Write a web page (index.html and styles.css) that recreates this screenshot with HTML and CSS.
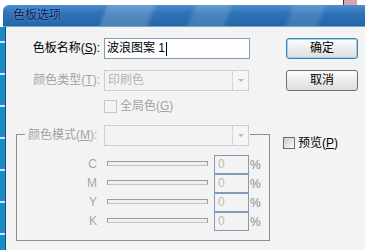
FILE: index.html
```html
<!DOCTYPE html>
<html>
<head>
  <meta charset="UTF-8">
  <link rel="stylesheet" href="styles.css">
</head>
<body>
  <div class="top-strip">
    <span class="tray"></span>
  </div>

  <div class="window">
    <div class="titlebar"><span class="title-text">色板选项</span></div>
    <div class="frame">
      <div class="edge"></div>
      <div class="dialog">
        <div class="form">
          <div class="row">
            <span class="lbl">色板名称(<u>S</u>):</span>
            <div class="field text">波浪图案 1<span class="caret"></span></div>
          </div>
          <div class="row gap-md">
            <span class="lbl off">颜色类型(<u>T</u>):</span>
            <div class="field select">
              <span>印刷色</span>
              <span class="arrow"></span>
            </div>
          </div>
          <div class="row gap-sm">
            <span class="lbl"></span>
            <span class="check off"><span class="box"></span><span>全局色(<u>G</u>)</span></span>
          </div>

          <div class="group">
            <div class="legend">
              <span class="legend-lbl off">颜色模式(<u>M</u>):</span>
              <div class="field select empty">
                <span></span>
                <span class="arrow"></span>
              </div>
            </div>
            <div class="ink-rows">
              <div class="ink"><span class="ch">C</span><span class="track"></span><span class="num">0</span><span class="pct">%</span></div>
              <div class="ink"><span class="ch">M</span><span class="track"></span><span class="num">0</span><span class="pct">%</span></div>
              <div class="ink"><span class="ch">Y</span><span class="track"></span><span class="num">0</span><span class="pct">%</span></div>
              <div class="ink"><span class="ch">K</span><span class="track"></span><span class="num">0</span><span class="pct">%</span></div>
            </div>
          </div>
        </div>

        <div class="side">
          <button class="btn default">确定</button>
          <button class="btn">取消</button>
          <span class="check preview"><span class="box"></span><span>预览(<u>P</u>)</span></span>
        </div>
      </div>
    </div>
  </div>
</body>
</html>
```

FILE: styles.css
```css
:root {
  --face: #f3f3f3;
  --text: #000000;
  --muted: #a3a3a3;
  --field-border: #7f9db9;
  --off-border: #cfcfcf;
}

body {
  margin: 0;
  width: 365px;
  height: 250px;
  overflow: hidden;
  background: #ffffff;
  font-family: "Liberation Sans", "Noto Sans CJK SC", sans-serif;
  font-size: 12px;
  color: var(--text);
}

u {
  text-decoration: underline;
  text-underline-offset: 1px;
}

.top-strip {
  height: 5px;
  display: flex;
  justify-content: flex-end;
  padding-right: 8px;
}

.tray {
  width: 14px;
  height: 5px;
  box-sizing: border-box;
  border-left: 1px solid #4a3038;
  border-right: 1px solid #c9a5ae;
  background: #d9a2b3;
}

.titlebar {
  margin-left: 3px;
  height: 21px;
  line-height: 21px;
  padding-left: 10px;
  border-top-left-radius: 6px;
  background:
    linear-gradient(110deg, transparent 0 96px, rgba(255,255,255,0.18) 100px 140px, transparent 146px 178px, rgba(255,255,255,0.14) 184px 212px, transparent 218px 270px, rgba(255,255,255,0.12) 276px 300px, transparent 306px),
    linear-gradient(to bottom, #4a8fcf 0%, #2f72b6 40%, #2566a8 100%);
  border-bottom: 1px solid #6fa6d8;
}

.title-text {
  color: #08195a;
  font-size: 12px;
  text-shadow: 0 0 2px rgba(200, 225, 255, 0.6);
}

.frame {
  display: flex;
  height: 223px;
}

.edge {
  width: 5px;
  border-right: 1px solid #0d4f7a;
  background:
    repeating-linear-gradient(to bottom, transparent 0 14px, rgba(255,255,255,0.8) 14px 16px, transparent 16px 32px),
    #1a8cc6;
}

.dialog {
  flex: 1;
  display: flex;
  background: var(--face);
  padding-top: 11px;
}

.form {
  width: 264px;
}

.row {
  display: flex;
  align-items: center;
  gap: 4px;
}

.gap-md { margin-top: 11px; }
.gap-sm { margin-top: 8px; }

.lbl {
  width: 94px;
  text-align: right;
  white-space: nowrap;
  line-height: 21px;
}

.off { color: var(--muted); }

.field {
  height: 21px;
  box-sizing: border-box;
  line-height: 19px;
}

.field.text {
  width: 146px;
  border: 1px solid var(--field-border);
  background: #ffffff;
  padding-left: 2px;
  display: flex;
  align-items: center;
  white-space: pre;
}

.caret {
  width: 1px;
  height: 14px;
  margin-left: 1px;
  background: #000000;
}

.field.select {
  width: 145px;
  border: 1px solid var(--off-border);
  background: #f2f2f2;
  color: #b5b5b5;
  display: flex;
  justify-content: space-between;
  padding-left: 3px;
}

.arrow {
  width: 16px;
  height: 19px;
  box-sizing: border-box;
  border-left: 1px solid #d6d6d6;
  background: #f5f5f5;
  display: flex;
  align-items: center;
  justify-content: center;
}

.arrow::after {
  content: '';
  border-left: 3px solid transparent;
  border-right: 3px solid transparent;
  border-top: 3px solid #b8b8b8;
}

.check {
  display: flex;
  align-items: center;
  gap: 3px;
  line-height: 14px;
  white-space: nowrap;
}

.check .box {
  width: 13px;
  height: 13px;
  box-sizing: border-box;
  border: 1px solid #c6c6c6;
  background: #f4f4f4;
}

.group {
  margin-top: 21px;
  margin-left: 10px;
  width: 254px;
  box-sizing: border-box;
  border: 1px solid #8e8e8e;
  padding-bottom: 9px;
}

.legend {
  margin-top: -10px;
  margin-left: 8px;
  display: flex;
  gap: 4px;
  width: 225px;
  background: var(--face);
}

.legend-lbl {
  width: 72px;
  padding-left: 3px;
  line-height: 21px;
  white-space: nowrap;
}

.ink-rows {
  margin-top: 9px;
}

.ink {
  display: flex;
  align-items: center;
  height: 19px;
}

.ch {
  width: 80px;
  text-align: right;
  color: #a6a6a6;
  line-height: 19px;
}

.track {
  width: 101px;
  height: 5px;
  margin-left: 10px;
  margin-bottom: 3px;
  box-sizing: border-box;
  border: 1px solid #9c9c9c;
  border-bottom-color: #c4c4c4;
  background: #efefef;
}

.num {
  width: 35px;
  height: 19px;
  margin-left: 6px;
  box-sizing: border-box;
  border: 1px solid var(--field-border);
  color: #bdbdbd;
  padding-left: 3px;
  line-height: 17px;
}

.pct {
  margin-left: 1px;
  color: #8a8a8a;
}

.side {
  margin-left: 16px;
  display: flex;
  flex-direction: column;
  align-items: flex-start;
}

.btn {
  width: 72px;
  height: 21px;
  padding: 0;
  border: 1px solid #707070;
  border-radius: 3px;
  background: linear-gradient(to bottom, #fdfdfd 0%, #ececec 50%, #dddddd 100%);
  font-family: inherit;
  font-size: 12px;
  color: #000000;
  line-height: 19px;
}

.btn + .btn { margin-top: 11px; }

.btn.default {
  border-color: #3c7fb1;
  box-shadow: inset 0 0 0 1px #9fd3f2;
}

.check.preview {
  margin-top: 45px;
  margin-left: -3px;
}

.check.preview .box {
  width: 12px;
  height: 12px;
  border-color: #6b6b6b;
  background: linear-gradient(135deg, #c9c9c9 0%, #e9e9e9 60%, #fbfbfb 100%);
}
```
